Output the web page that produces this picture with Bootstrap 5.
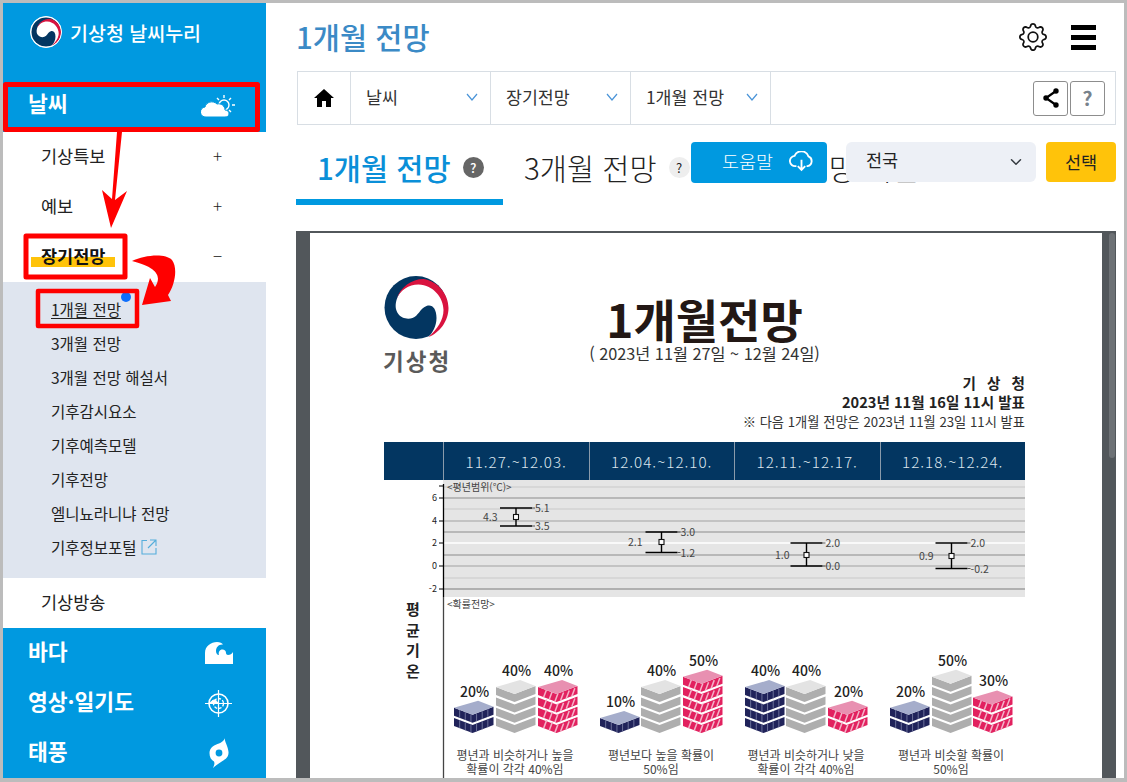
<!DOCTYPE html>
<html lang="ko">

<head>
    <meta charset="UTF-8">
    <title>1개월 전망</title>
    <link href="https://cdn.jsdelivr.net/npm/bootstrap@5.3.0/dist/css/bootstrap.min.css" rel="stylesheet">
    <style>
        body {
            margin: 0;
            background: #fff;
            font-family: "Noto Sans CJK KR", "Noto Sans", sans-serif;
            overflow: hidden;
        }

        .frame {
            width: 1127px;
            height: 782px;
            border: solid #bcbcbc;
            border-width: 3px 3px 4px 3px;
            position: relative;
            overflow: hidden;
        }

        /* 왼쪽 메뉴 */
        .side {
            width: 263px;
            flex: none;
            background: #fff;
        }

        .side-logo {
            height: 80px;
            background: #0099e0;
            padding: 13px 0 0 27px;
            color: #fff;
            font-size: 19.5px;
            font-weight: 500;
        }

        .side-logo svg {
            border: 1px solid #fff;
            border-radius: 50%;
            background: #fff;
        }

        .side-logo span {
            line-height: 26px;
        }

        .group-head {
            height: 50px;
            padding: 0 30px 4px 25px;
            background: #0099e0;
            color: #fff;
            font-size: 21.5px;
            font-weight: 700;
        }

        .group-head.first {
            height: 49px;
            padding-bottom: 8px;
        }

        .group-head svg {
            margin-top: 4px;
        }

        .group-head .icon-wave {
            margin-right: 3px;
        }

        .group-head .icon-storm {
            margin-right: 4.5px;
        }

        .menu-row {
            height: 50px;
            padding: 0 44px 2px 38px;
            font-size: 17.5px;
            color: #222;
        }

        .menu-row .sign {
            font-size: 17px;
            font-weight: 300;
        }

        .hilite {
            font-weight: 700;
            color: #111;
            margin-left: -10px;
            padding: 0 10px;
            background: linear-gradient(transparent 52%, #ffc30a 52%, #ffc30a 92%, transparent 92%);
            line-height: 26px;
        }

        .sub-menu {
            background: #dfe5ef;
            padding: 10px 0 14px 48px;
        }

        .sub-menu div {
            height: 34px;
            line-height: 34px;
            font-size: 15.5px;
            color: #222;
        }

        .cur-item {
            position: relative;
            display: inline-block;
            line-height: 24px;
            text-decoration: underline;
            text-underline-offset: 2px;
        }

        .cur-dot {
            position: absolute;
            right: -10px;
            top: -5px;
            width: 10px;
            height: 10px;
            border-radius: 50%;
            background: #0d6efd;
        }

        /* 오른쪽 본문 */
        .main-area {
            flex: 1 1 auto;
            min-width: 0;
            padding: 0 8px 0 30px;
            display: flex;
            flex-direction: column;
            position: relative;
        }

        .title-row {
            height: 68px;
            flex: none;
            padding-right: 20px;
        }

        .page-title {
            font-size: 29.5px;
            font-weight: 500;
            color: #3b8ac6;
            margin: 0;
        }

        .crumbs {
            height: 54px;
            flex: none;
            margin-left: 1px;
            border: 1px solid #d8dee4;
        }

        .crumb-home {
            width: 53px;
            height: 100%;
            border-right: 1px solid #d8dee4;
        }

        .crumb-cell {
            width: 140px;
            height: 100%;
            padding: 0 12px 2px 15px;
            border-right: 1px solid #d8dee4;
            font-size: 17.3px;
            color: #333;
        }

        .icon-btn {
            width: 35px;
            height: 35px;
            padding: 0;
            border: 1px solid #8d8d8d;
            border-radius: 3px;
            background: #fff;
            color: #78828c;
            font-weight: 700;
            font-size: 20px;
            line-height: 32px;
        }

        .btn-pair {
            gap: 2px;
            margin-right: 10px;
        }

        .tabs-row {
            height: 65px;
            margin-top: 15px;
            flex: none;
        }

        .tab-on {
            width: 207px;
            height: 65px;
            padding: 0 0 4px 21px;
            border-bottom: 6px solid #0099e0;
            color: #0a8fd8;
            font-size: 29.5px;
            font-weight: 500;
        }

        .tab-off {
            height: 65px;
            padding-bottom: 10px;
            color: #222;
            font-size: 29.5px;
            font-weight: 300;
        }

        .tab-second {
            margin-left: 21px;
        }

        .tab-third {
            margin-left: 112px;
        }

        .tab-q {
            width: 21px;
            height: 21px;
            border-radius: 50%;
            font-size: 13px;
            line-height: 21px;
            text-align: center;
        }

        .q-dark {
            background: #666;
            color: #fff;
            margin-left: 12px;
        }

        .q-light {
            background: #eee;
            color: #222;
            margin-left: 12px;
            font-weight: 400;
        }

        .tool-over {
            position: absolute;
            top: 139px;
            right: 8px;
        }

        .help-btn {
            width: 136px;
            height: 41px;
            margin-right: 19px;
            padding: 0 0 2px 18px;
            background: #0099e0;
            border: 0;
            border-radius: 4px;
            color: #fff;
            font-size: 18.5px;
            font-weight: 300;
        }

        .area-select {
            width: 190px;
            height: 40px;
            margin-right: 10px;
            padding-left: 20px;
            padding-top: 3px;
            background-color: #edf0f6;
            border: 0;
            color: #222;
            font-size: 17.5px;
            box-shadow: none;
        }

        .pick-btn {
            width: 70px;
            height: 40px;
            padding: 0;
            background: #ffc30a;
            border: 0;
            border-radius: 4px;
            color: #222;
            font-size: 17.5px;
        }

        /* 문서 보기 */
        .viewer {
            flex: 1 1 auto;
            min-height: 0;
            margin-top: 26px;
            padding-top: 2px;
            background: #52575b;
        }

        .viewer-gap {
            width: 14px;
            flex: none;
        }

        .viewer-thumb {
            width: 6px;
            height: 225px;
            margin-left: 7px;
            background: #6d7175;
            border-radius: 3px;
        }

        .doc-page {
            flex: 1 1 auto;
            background: #fff;
            padding: 43px 77px 0 74px;
            overflow: hidden;
        }

        .doc-head {
            display: grid;
            grid-template-columns: 67px 1fr 67px;
            height: 98px;
        }

        .doc-logo {
            display: block;
            margin-left: -1px;
        }

        .doc-logo-text {
            font-size: 22.5px;
            font-weight: 700;
            color: #5a5a5a;
            letter-spacing: 2px;
            line-height: 32px;
            margin: 5px 0 0 -1px;
            white-space: nowrap;
        }

        .doc-title {
            font-size: 46px;
            font-weight: 700;
            color: #231815;
            line-height: 50px;
            margin-top: 17px;
        }

        .doc-sub {
            font-size: 16.3px;
            color: #333;
            line-height: 20px;
        }

        .doc-meta {
            text-align: right;
            color: #222;
            line-height: 18.5px;
        }

        .doc-meta b {
            display: block;
            font-size: 14.6px;
            font-weight: 700;
        }

        .doc-meta b.spread {
            word-spacing: 7px;
        }

        .doc-meta span {
            font-size: 13.25px;
            color: #333;
        }

        .week-head {
            margin-top: 10px;
            height: 38px;
            background: #033661;
            color: #dde6ee;
            font-size: 15.2px;
            font-weight: 300;
            letter-spacing: 1px;
        }

        .week-head div {
            width: 145.5px;
            height: 100%;
            line-height: 38px;
            text-align: center;
            border-left: 1px solid #8a9bab;
        }

        .week-head div:first-child {
            width: 59px;
            border-left: 0;
        }

        .chart-box {
            display: block;
        }

        .note-layer {
            position: absolute;
            left: -3px;
            top: -3px;
            pointer-events: none;
        }
    </style>
</head>

<body>
    <svg width="0" height="0" class="d-block">
        <symbol id="taegeuk" viewBox="0 0 65 63">
            <circle cx="32.5" cy="31.5" r="31.5" fill="#033661" />
            <path d="M13 24C9 38 20 45 29 42C35 40 36 33 43 30C49 28 53 33 53 42C53 50 49 57 45 61C56 55 62 44 61 32C60 16 46 5 32 7C22 8 16 15 13 24Z" fill="#fff" />
            <path d="M13 23C17 11 28 3 40 3C54 5 65 18 65 32C65 45 56 57 45 61C54 53 60 44 60 34C60 22 50 9 35 8.5C25 8.5 17 14 13 23Z" fill="#d9133f" />
        </symbol>
    </svg>

    <div class="frame d-flex">
        <aside class="side">
            <div class="side-logo d-flex align-items-start gap-2">
                <svg width="32" height="32"><use href="#taegeuk" /></svg>
                <span class="mt-1">기상청 날씨누리</span>
            </div>
            <div class="group-head first d-flex align-items-center justify-content-between">
                <span>날씨</span>
                <svg width="35" height="24" viewBox="0 0 35 24">
                    <g stroke="#fff" stroke-width="1.4" fill="none">
                        <circle cx="23" cy="11" r="5" />
                        <path d="M23 1v3M30 4l-2 2M34 11h-3M30 18l-2-2M16 4l2 2" />
                    </g>
                    <path d="M5 23a5 5 0 0 1-1-10c1-5 8-7 12-3c4-1 8 2 8 6c3 0 4 2 4 4c0 2-2 3-4 3Z" fill="#fff" stroke="#0099e0" />
                </svg>
            </div>
            <div class="menu-row d-flex align-items-center justify-content-between"><span>기상특보</span><span class="sign">+</span></div>
            <div class="menu-row d-flex align-items-center justify-content-between"><span>예보</span><span class="sign">+</span></div>
            <div class="menu-row d-flex align-items-center justify-content-between"><span class="hilite">장기전망</span><span class="sign">−</span></div>
            <div class="sub-menu">
                <div><span class="cur-item">1개월 전망<i class="cur-dot"></i></span></div>
                <div>3개월 전망</div>
                <div>3개월 전망 해설서</div>
                <div>기후감시요소</div>
                <div>기후예측모델</div>
                <div>기후전망</div>
                <div>엘니뇨라니냐 전망</div>
                <div class="d-flex align-items-center">기후정보포털
                    <svg class="ms-1" width="16" height="16" viewBox="0 0 16 16" fill="none" stroke="#55aedb" stroke-width="1.1">
                        <path d="M6 1.5H1V15H15V9M9 1H15V7M15 1L7 9" />
                    </svg>
                </div>
            </div>
            <div class="menu-row d-flex align-items-center"><span>기상방송</span></div>
            <div class="group-head d-flex align-items-center justify-content-between">
                <span>바다</span>
                <svg width="28" height="22" viewBox="0 0 28 22" class="icon-wave">
                    <path d="M0 22V11C0 4 6 0 12 0C15 0 17 1 18 2.5C14 2 11 5 11 9C11 11 12 13 14 13C13 10 15 7 18 7.5C20 8 21 9 21 11C21 12 22 13 23 13C25 13 27 12 28 10V22Z" fill="#fff" />
                </svg>
            </div>
            <div class="group-head d-flex align-items-center justify-content-between">
                <span>영상·일기도</span>
                <svg class="me-1" width="27" height="27" viewBox="0 0 27 27" fill="none" stroke="#fff">
                    <circle cx="13.5" cy="13.5" r="9.5" stroke-width="1.6" />
                    <circle cx="13.5" cy="13.5" r="5" stroke-width="1.4" stroke-dasharray="3 1.5" />
                    <path d="M13.5 0V27M0 13.5H27" stroke-width="1.2" />
                    <path d="M5 13.5C7 9 11 9 13 13Z" fill="#fff" />
                </svg>
            </div>
            <div class="group-head d-flex align-items-center justify-content-between">
                <span>태풍</span>
                <svg width="26" height="30" viewBox="0 0 26 30" class="icon-storm">
                    <path d="M19 0C18 3 22 8 22.5 14C23 20 18 22 15 24C12 26 9 28 7 30C8 27 9 26 8 23.5C5 22 3.5 19 3.5 15C3.5 9 9 7 13 5.5C15 4.5 18 3 19 0Z" fill="#fff" />
                    <circle cx="13" cy="15" r="3.4" fill="#0099e0" />
                </svg>
            </div>
        </aside>

        <main class="main-area">
            <div class="title-row d-flex align-items-center justify-content-between">
                <h1 class="page-title">1개월 전망</h1>
                <div class="d-flex align-items-center gap-4">
                    <svg width="28" height="28" viewBox="0 0 16 16" fill="#111">
                        <path d="M8 4.754a3.246 3.246 0 1 0 0 6.492 3.246 3.246 0 0 0 0-6.492zM5.754 8a2.246 2.246 0 1 1 4.492 0 2.246 2.246 0 0 1-4.492 0z" />
                        <path d="M9.796 1.343c-.527-1.79-3.065-1.79-3.592 0l-.094.319a.873.873 0 0 1-1.255.52l-.292-.16c-1.64-.892-3.433.902-2.54 2.541l.159.292a.873.873 0 0 1-.52 1.255l-.319.094c-1.79.527-1.79 3.065 0 3.592l.319.094a.873.873 0 0 1 .52 1.255l-.16.292c-.892 1.64.901 3.434 2.541 2.54l.292-.159a.873.873 0 0 1 1.255.52l.094.319c.527 1.79 3.065 1.79 3.592 0l.094-.319a.873.873 0 0 1 1.255-.52l.292.16c1.64.893 3.434-.902 2.54-2.541l-.159-.292a.873.873 0 0 1 .52-1.255l.319-.094c1.79-.527 1.79-3.065 0-3.592l-.319-.094a.873.873 0 0 1-.52-1.255l.16-.292c.893-1.64-.902-3.433-2.541-2.54l-.292.159a.873.873 0 0 1-1.255-.52l-.094-.319zm-2.633.283c.246-.835 1.428-.835 1.674 0l.094.319a1.873 1.873 0 0 0 2.693 1.115l.291-.16c.764-.415 1.6.42 1.184 1.185l-.159.292a1.873 1.873 0 0 0 1.116 2.692l.318.094c.835.246.835 1.428 0 1.674l-.319.094a1.873 1.873 0 0 0-1.115 2.693l.16.291c.415.764-.42 1.6-1.185 1.184l-.291-.159a1.873 1.873 0 0 0-2.693 1.116l-.094.318c-.246.835-1.428.835-1.674 0l-.094-.319a1.873 1.873 0 0 0-2.692-1.115l-.292.16c-.764.415-1.6-.42-1.184-1.185l.159-.291A1.873 1.873 0 0 0 1.945 8.93l-.319-.094c-.835-.246-.835-1.428 0-1.674l.319-.094A1.873 1.873 0 0 0 3.06 4.377l-.16-.292c-.415-.764.42-1.6 1.185-1.184l.292.159a1.873 1.873 0 0 0 2.692-1.115l.094-.319z" />
                    </svg>
                    <svg width="25" height="25" viewBox="0 0 25 25" fill="#000">
                        <rect y="0" width="25" height="5" />
                        <rect y="10" width="25" height="5" />
                        <rect y="20" width="25" height="5" />
                    </svg>
                </div>
            </div>

            <nav class="crumbs d-flex align-items-center">
                <div class="crumb-home d-flex align-items-center justify-content-center">
                    <svg width="20" height="18" viewBox="0 0 20 18" fill="#000">
                        <path d="M10 0L20 9H17V18H12V12H8V18H3V9H0Z" />
                    </svg>
                </div>
                <div class="crumb-cell d-flex align-items-center justify-content-between"><span>날씨</span><svg width="12" height="8" viewBox="0 0 12 8" fill="none" stroke="#4a94d8" stroke-width="1.2"><path d="M1 1L6 7L11 1" /></svg></div>
                <div class="crumb-cell d-flex align-items-center justify-content-between"><span>장기전망</span><svg width="12" height="8" viewBox="0 0 12 8" fill="none" stroke="#4a94d8" stroke-width="1.2"><path d="M1 1L6 7L11 1" /></svg></div>
                <div class="crumb-cell d-flex align-items-center justify-content-between"><span>1개월 전망</span><svg width="12" height="8" viewBox="0 0 12 8" fill="none" stroke="#4a94d8" stroke-width="1.2"><path d="M1 1L6 7L11 1" /></svg></div>
                <div class="ms-auto d-flex btn-pair">
                    <button class="btn icon-btn d-flex align-items-center justify-content-center" aria-label="공유">
                        <svg width="16" height="20" viewBox="0 0 16 20" fill="#000" stroke="#000" stroke-width="2.2">
                            <path d="M13 3L3 10L13 17" fill="none" />
                            <circle cx="13" cy="3" r="1.6" />
                            <circle cx="3" cy="10" r="1.6" />
                            <circle cx="13" cy="17" r="1.6" />
                        </svg>
                    </button>
                    <button class="btn icon-btn">?</button>
                </div>
            </nav>

            <div class="tabs-row d-flex">
                <div class="tab-on d-flex align-items-center">1개월 전망<span class="tab-q q-dark">?</span></div>
                <div class="tab-off tab-second d-flex align-items-center">3개월 전망<span class="tab-q q-light">?</span></div>
                <div class="tab-off tab-third d-flex align-items-center">전망 해설</div>
            </div>

            <div class="tool-over d-flex">
                <button class="btn help-btn d-flex align-items-center justify-content-center gap-3">도움말
                    <svg width="25" height="21" viewBox="0 0 27 22" fill="none" stroke="#fff" stroke-width="2">
                        <path d="M8 16H7A5.5 5.5 0 0 1 6 5A8 8 0 0 1 21 5.5A5.5 5.5 0 0 1 20 16H19" />
                        <path d="M13.5 9V20M9.5 16L13.5 20L17.5 16" />
                    </svg>
                </button>
                <select class="form-select area-select">
                    <option>전국</option>
                </select>
                <button class="btn pick-btn">선택</button>
            </div>

            <div class="viewer d-flex">
                <div class="viewer-gap"></div>
                <div class="doc-page">
                    <div class="doc-head">
                        <div>
                            <svg width="66" height="63" class="doc-logo"><use href="#taegeuk" /></svg>
                            <div class="doc-logo-text">기상청</div>
                        </div>
                        <div class="text-center">
                            <div class="doc-title">1개월전망</div>
                            <div class="doc-sub">( 2023년 11월 27일 ~ 12월 24일)</div>
                        </div>
                        <div></div>
                    </div>
                    <div class="doc-meta">
                        <b class="spread">기 상 청</b>
                        <b>2023년 11월 16일 11시 발표</b>
                        <span>※ 다음 1개월 전망은 2023년 11월 23일 11시 발표</span>
                    </div>
                    <div class="week-head d-flex">
                        <div></div>
                        <div>11.27.~12.03.</div>
                        <div>12.04.~12.10.</div>
                        <div>12.11.~12.17.</div>
                        <div>12.18.~12.24.</div>
                    </div>
                    <svg id="chart" class="chart-box" width="641" height="298" viewBox="384 480 641 298"></svg>
                </div>
                <div class="viewer-gap"><div class="viewer-thumb"></div></div>
            </div>
        </main>

        <!-- 빨간 표시 (화면 위에 덧그림) -->
        <svg class="note-layer" width="1127" height="782" viewBox="0 0 1127 782">
            <g fill="none" stroke="#f00" stroke-linejoin="round">
                <rect x="5.5" y="84.5" width="252" height="45" stroke-width="5" />
                <rect x="26" y="236" width="99" height="41" stroke-width="5" />
                <rect x="38" y="291" width="99" height="35" stroke-width="4.5" />
            </g>
            <path d="M117 132H122L115 200L127 191L111 228L102 190L112 199Z" fill="#f00" />
            <path d="M132 261C145 255 165 253 172 260C178 268 175 285 168 295L171 301L142 305L150 278L155 287C161 278 160 268 132 261Z" fill="#f00" />
        </svg>
    </div>

    <script src="https://cdn.jsdelivr.net/npm/bootstrap@5.3.0/dist/js/bootstrap.bundle.min.js"></script>
    <script>
        // 차트 그리기
        const FONT = 'font-family="Noto Sans CJK KR, sans-serif"';
        let out = "";

        function label(x, y, s, size, color, extra = "") {
            return `<text x="${x}" y="${y}" ${FONT} font-size="${size}" fill="${color}" ${extra}>${s}</text>`;
        }

        // 평년범위 배경
        out += `<rect x="443" y="480" width="582" height="117" fill="#e5e5e5"/>`;
        [[487, 1, "#c9c9c9"], [498, 2, "#b8b8b8"], [509, 1, "#c9c9c9"], [521, 1.5, "#b8b8b8"], [532, 2, "#b8b8b8"],
        [543, 1.5, "#fff"], [555, 2, "#b8b8b8"], [566, 1.5, "#b8b8b8"], [578, 1, "#c9c9c9"], [589, 2, "#b0b0b0"]].forEach(g => {
            out += `<rect x="443" y="${g[0] - g[1] / 2}" width="582" height="${g[1]}" fill="${g[2]}"/>`;
        });
        out += `<path d="M443.5 484V597" stroke="#000" stroke-width="1.3"/><path d="M443.5 597V778" stroke="#444" stroke-width="1.3"/>`;
        [["6", 498], ["4", 521], ["2", 543], ["0", 566], ["-2", 589]].forEach(t => {
            out += `<path d="M439 ${t[1]}H443" stroke="#000"/>`;
            out += label(437, t[1] + 3, t[0], 9, "#222", 'text-anchor="end"');
        });
        out += `<path d="M439 486H443" stroke="#000"/>`;
        out += label(447, 491, "&lt;평년범위(℃)&gt;", 10, "#444");
        out += label(447, 608, "&lt;확률전망&gt;", 10, "#444");
        "평균기온".split("").forEach((c, i) => {
            out += label(413, 615 + i * 20.7, c, 15, "#222", 'font-weight="700" text-anchor="middle"');
        });

        // 오차 막대
        [
            { c: 516, t: 508, b: 526, m: 517, up: "5.1", lo: "3.5", mid: "4.3", mx: 483 },
            { c: 661.5, t: 532, b: 552.5, m: 542, up: "3.0", lo: "1.2", mid: "2.1", mx: 628 },
            { c: 806.5, t: 543, b: 566, m: 555, up: "2.0", lo: "0.0", mid: "1.0", mx: 775 },
            { c: 951.5, t: 543, b: 568.5, m: 556, up: "2.0", lo: "-0.2", mid: "0.9", mx: 919 }
        ].forEach(e => {
            out += `<path d="M${e.c - 16} ${e.t}H${e.c + 16}M${e.c - 16} ${e.b}H${e.c + 16}M${e.c} ${e.t}V${e.b}" stroke="#000" stroke-width="1.4" fill="none"/>`;
            out += `<rect x="${e.c - 2.5}" y="${e.m - 2.5}" width="5" height="5" fill="#fff" stroke="#111" stroke-width="1.1"/>`;
            out += `<path d="M${e.c + 16} ${e.t}h3M${e.c + 16} ${e.b}h3" stroke="#555"/>`;
            out += label(e.c + 19, e.t + 4, e.up, 10.5, "#444");
            out += label(e.c + 19, e.b + 4, e.lo, 10.5, "#444");
            out += label(e.mx, e.m + 4, e.mid, 10.5, "#444");
        });

        // 블록 한 층
        const STYLE = {
            navy: { top: "#a5adcb", face: "#20235a", line: "#6b7099" },
            gray: { top: "#e3e3e3", face: "#aeaeae", line: null },
            pink: { top: "#e890b1", face: "#e2215f", line: "#f3b3c8" }
        };

        function layer(x0, w, yf, kind, isTop) {
            const s = STYLE[kind];
            const xf = x0 + w * 0.47, x1 = x0 + w;
            let g = `<polygon points="${x0},${yf - 7} ${xf},${yf} ${x1},${yf - 8} ${x1},${yf} ${xf},${yf + 8} ${x0},${yf + 1}" fill="${s.face}"/>`;
            if (s.line) {
                for (let k = 1; k < 7; k++) {
                    const x = x0 + k * w / 7;
                    const dy = x < xf ? (x - x0) / (xf - x0) * 7 - 7 : -(x - xf) / (x1 - xf) * 8;
                    const slant = kind === "pink" ? 3 : 0;
                    g += `<path d="M${x} ${yf + dy + 8}L${x + slant} ${yf + dy}" stroke="${s.line}" stroke-width="${kind === "pink" ? 1.5 : 1}"/>`;
                }
            }
            if (isTop) {
                g += `<polygon points="${x0},${yf - 7} ${x0 + w * 0.61},${yf - 14} ${x1},${yf - 8} ${xf},${yf}" fill="${s.top}"/>`;
            }
            return g;
        }

        function stack(x0, w, n, kind) {
            let g = "";
            for (let i = 0; i < n; i++) {
                g += layer(x0, w, 725 - i * 10.3, kind, i === n - 1);
            }
            return g;
        }

        [
            { bars: [[454, 2, "20%"], [496, 4, "40%"], [538, 4, "40%"]], txt: ["평년과 비슷하거나 높을", "확률이 각각 40%임"], c: 515 },
            { bars: [[600, 1, "10%"], [641, 4, "40%"], [683, 5, "50%"]], txt: ["평년보다 높을 확률이", "50%임"], c: 661 },
            { bars: [[745, 4, "40%"], [786, 4, "40%"], [828, 2, "20%"]], txt: ["평년과 비슷하거나 낮을", "확률이 각각 40%임"], c: 806 },
            { bars: [[890, 2, "20%"], [932, 5, "50%"], [973, 3, "30%"]], txt: ["평년과 비슷할 확률이", "50%임"], c: 951 }
        ].forEach(col => {
            ["navy", "gray", "pink"].forEach((kind, i) => {
                const b = col.bars[i];
                out += stack(b[0], 39.5, b[1], kind);
                const apex = 725 - (b[1] - 1) * 10.3 - 14;
                out += label(b[0] + 20.5, apex - 4, b[2], 14, "#222", 'text-anchor="middle" font-weight="500"');
            });
            out += label(col.c, 760, col.txt[0], 12, "#444", 'text-anchor="middle"');
            out += label(col.c, 774, col.txt[1], 12, "#444", 'text-anchor="middle"');
        });

        document.getElementById("chart").innerHTML = out;
    </script>
</body>

</html>
